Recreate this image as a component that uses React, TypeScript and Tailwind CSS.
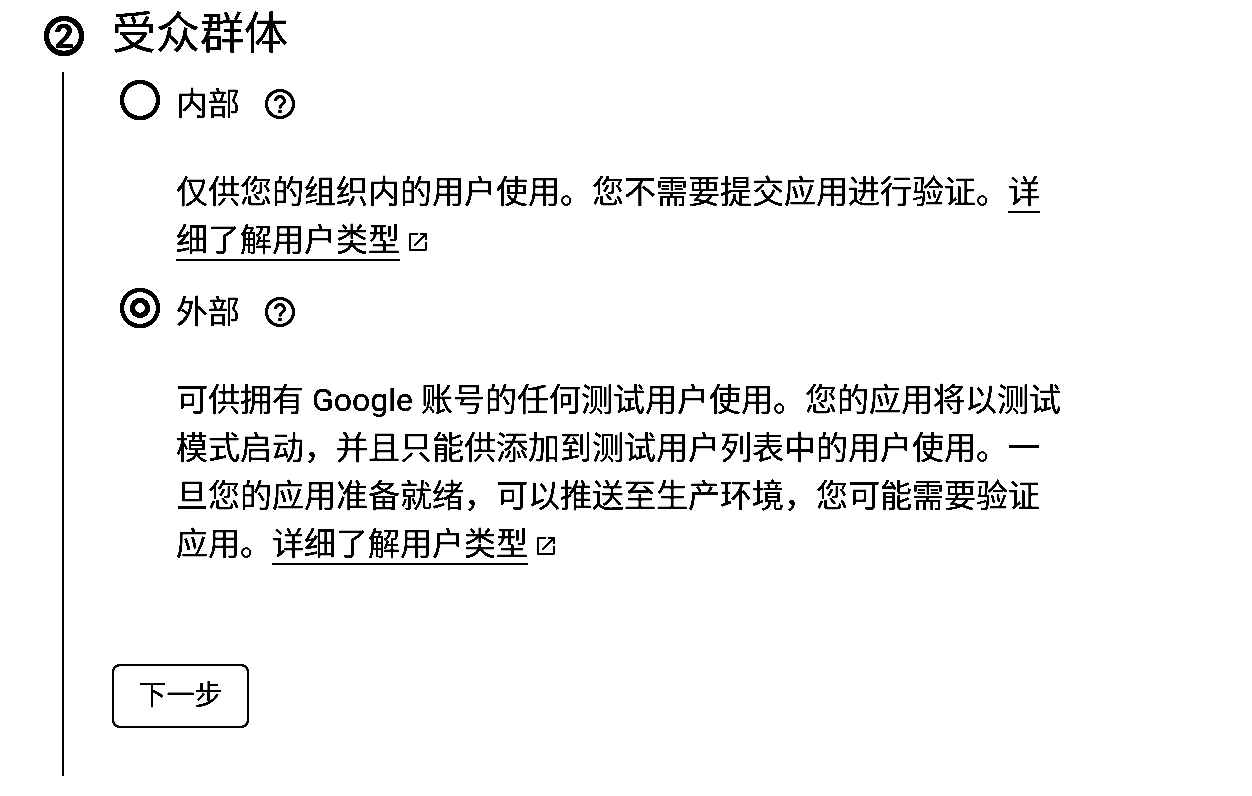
const fontStack = "font-['Roboto','Noto_Sans_CJK_SC',sans-serif]";

function HelpIcon() {
  return (
    <svg width="36" height="36" viewBox="0 0 24 24" fill="#555" className="shrink-0">
      <path d="M11 18h2v-2h-2v2zm1-16C6.48 2 2 6.48 2 12s4.48 10 10 10 10-4.48 10-10S17.52 2 12 2zm0 18c-4.41 0-8-3.59-8-8s3.59-8 8-8 8 3.59 8 8-3.59 8-8 8zm0-14c-2.21 0-4 1.79-4 4h2c0-1.1.9-2 2-2s2 .9 2 2c0 2-3 1.75-3 5h2c0-2.25 3-2.5 3-5 0-2.21-1.79-4-4-4z" />
    </svg>
  );
}

function ExternalIcon() {
  return (
    <svg width="24" height="24" viewBox="0 0 24 24" fill="#000" className="inline-block align-[-3px] ml-1.5">
      <path d="M19 19H5V5h7V3H5a2 2 0 0 0-2 2v14a2 2 0 0 0 2 2h14c1.1 0 2-.9 2-2v-7h-2v7zM14 3v2h3.59l-9.83 9.83 1.41 1.41L19 6.41V10h2V3h-7z" />
    </svg>
  );
}

function Radio({ checked }: { checked?: boolean }) {
  return (
    <div className={`w-10 h-10 shrink-0 rounded-full border-black flex items-center justify-center ${checked ? "border-[4px]" : "border-[4px]"}`}>
      {checked && <div className="w-5 h-5 rounded-full border-[5px] border-black" />}
    </div>
  );
}

function LearnMore({ text }: { text: string }) {
  return (
    <>
      <a className="border-b-2 border-black">{text}</a>
      <ExternalIcon />
    </>
  );
}

export default function App() {
  return (
    <div className={`w-[1252px] h-[796px] overflow-hidden bg-white text-black brightness-[0.7] contrast-[10] ${fontStack}`}>
      {/* Step header */}
      <div className="flex items-center h-[72px] pl-[44px]">
        <div className="w-10 h-10 rounded-full border-[5px] border-black flex items-center justify-center text-[34px] font-bold leading-none">
          2
        </div>
        <h2 className="ml-7 -mt-1 text-[44px] leading-[64px] font-normal">受众群体</h2>
      </div>

      {/* Step body */}
      <div className="ml-[62px] w-[1000px] h-[704px] border-l-2 border-black pl-[48px]">
        <div className="flex items-center h-[56px] pl-[8px]">
          <Radio />
          <span className="ml-4 text-[32px] leading-[48px] mt-2">内部</span>
          <span className="ml-[22px] mt-2"><HelpIcon /></span>
        </div>
        <p className="mt-[40px] ml-[64px] w-[888px] text-[32px] leading-[48px]">
          仅供您的组织内的用户使用。您不需要提交应用进行验证。<LearnMore text="详细了解用户类型" />
        </p>
        <div className="flex items-center h-[56px] mt-[16px] pl-[8px]">
          <Radio checked />
          <span className="ml-4 text-[32px] leading-[48px] mt-2">外部</span>
          <span className="ml-[22px] mt-2"><HelpIcon /></span>
        </div>
        <p className="mt-[40px] ml-[64px] w-[888px] text-[32px] leading-[48px]">
          可供拥有 Google 账号的任何测试用户使用。您的应用将以测试模式启动，并且只能供添加到测试用户列表中的用户使用。一旦您的应用准备就绪，可以推送至生产环境，您可能需要验证应用。<LearnMore text="详细了解用户类型" />
        </p>
        <button className="mt-[96px] w-[137px] h-[64px] rounded-lg border-2 border-black text-[28px] leading-none bg-white">
          下一步
        </button>
      </div>
    </div>
  );
}
